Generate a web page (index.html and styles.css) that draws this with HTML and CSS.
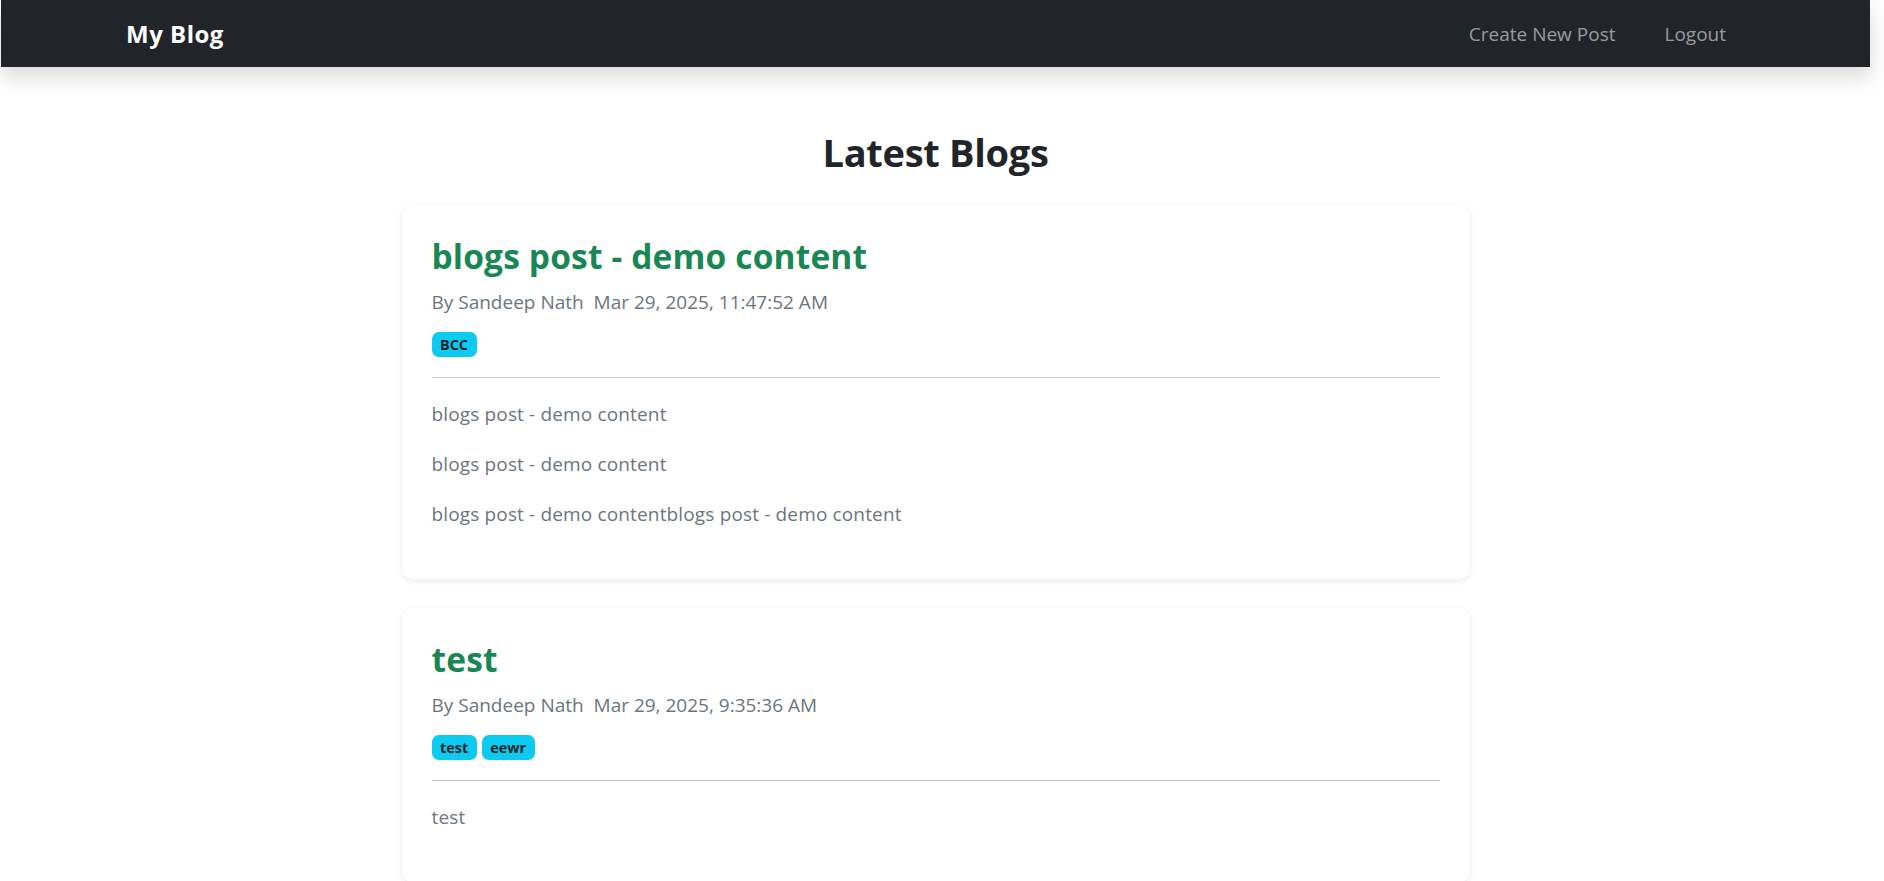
FILE: index.html
```html
<!DOCTYPE html>
<html lang="en">
<head>
<meta charset="utf-8">
<title>My Blog</title>
<link rel="stylesheet" href="styles.css">
</head>
<body>
<div class="page">
  <nav class="navbar">
    <a class="brand" href="#">My Blog</a>
    <div class="nav-links">
      <a class="nav-link" href="#">Create New Post</a>
      <a class="nav-link" href="#">Logout</a>
    </div>
  </nav>

  <main class="main">
    <h2 class="page-title">Latest Blogs</h2>

    <article class="card">
      <h3 class="post-title">blogs post - demo content</h3>
      <p class="meta">By Sandeep Nath&nbsp; Mar 29, 2025, 11:47:52 AM</p>
      <div class="tags">
        <span class="badge">BCC</span>
      </div>
      <hr class="divider">
      <div class="post-body">
        <p>blogs post - demo content</p>
        <p>blogs post - demo content</p>
        <p>blogs post - demo contentblogs post - demo content</p>
      </div>
    </article>

    <article class="card">
      <h3 class="post-title">test</h3>
      <p class="meta">By Sandeep Nath&nbsp; Mar 29, 2025, 9:35:36 AM</p>
      <div class="tags">
        <span class="badge">test</span>
        <span class="badge">eewr</span>
      </div>
      <hr class="divider">
      <div class="post-body">
        <p>test</p>
      </div>
    </article>
  </main>
</div>
</body>
</html>
```
FILE: styles.css
```css
html {
  overflow: hidden;
}

body {
  margin: 0;
  background: #ffffff;
  color: #212529;
  font-family: "Open Sans", "Noto Sans", sans-serif;
  font-size: 19px;
  line-height: 30px;
}

.page {
  width: 1869px;
  margin-left: 1px;
}

/* ---------- navbar ---------- */
.navbar {
  height: 67px;
  background: #212529;
  box-shadow: 0 10px 20px rgba(0, 0, 0, 0.15);
  display: flex;
  align-items: center;
  justify-content: space-between;
  padding: 0 144px 0 125px;
  box-sizing: border-box;
}

.brand {
  color: #ffffff;
  font-weight: 700;
  font-size: 24px;
  line-height: 30px;
  text-decoration: none;
  letter-spacing: 0.5px;
}

.nav-links {
  display: flex;
  gap: 49px;
}

.nav-link {
  color: rgba(255, 255, 255, 0.55);
  font-size: 19px;
  line-height: 30px;
  text-decoration: none;
}

/* ---------- main ---------- */
.main {
  display: flex;
  flex-direction: column;
  align-items: center;
}

.page-title {
  margin: 61px 0 29px;
  font-size: 38px;
  line-height: 48px;
  font-weight: 700;
  letter-spacing: -0.3px;
  color: #212529;
}

.card {
  width: 1068px;
  box-sizing: border-box;
  padding: 30px;
  margin-bottom: 29px;
  background: #ffffff;
  border-radius: 10px;
  box-shadow: 0 2px 6px rgba(0, 0, 0, 0.075), 0 0 2px rgba(0, 0, 0, 0.04);
}

.post-title {
  margin: 0 0 10px;
  font-size: 33.5px;
  line-height: 42px;
  font-weight: 700;
  letter-spacing: 0.15px;
  color: #198754;
}

.meta {
  margin: 0 0 15px;
  color: #6c757d;
  font-size: 19px;
  line-height: 30px;
}

.tags {
  display: flex;
  gap: 5px;
  height: 25px;
}

.badge {
  display: inline-block;
  height: 25px;
  padding: 0 8.5px;
  border-radius: 7px;
  background: #0dcaf0;
  color: #212529;
  font-size: 14.4px;
  font-weight: 700;
  line-height: 25px;
}

.divider {
  margin: 20px 0 21px;
  border: 0;
  border-top: 1px solid #c8c9ca;
  height: 0;
}

.post-body {
  color: #6c757d;
}

.post-body p {
  margin: 0 0 20px;
  font-size: 19px;
  line-height: 30px;
  letter-spacing: 0.15px;
}
```
